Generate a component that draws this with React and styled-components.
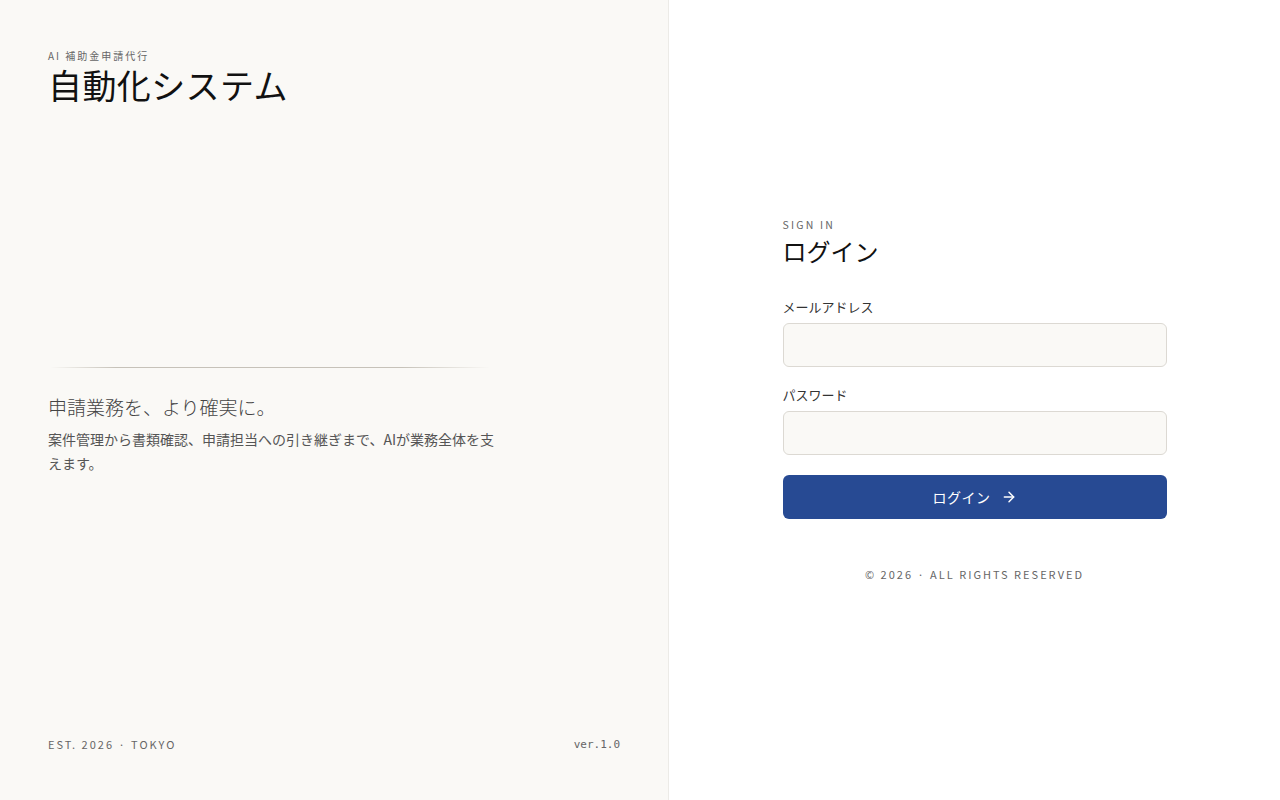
import React from 'react';
import styled, { createGlobalStyle } from 'styled-components';

const GlobalStyle = createGlobalStyle`
  html, body {
    margin: 0;
    padding: 0;
    height: 100%;
  }
  body {
    font-family: "Noto Sans CJK JP", "Noto Sans", sans-serif;
    color: #222;
    background: #ffffff;
  }
  #root {
    height: 100%;
  }
`;

const serif = `"Liberation Serif", "Noto Sans CJK JP", serif`;

const Page = styled.div`
  display: grid;
  grid-template-columns: 669px 1fr;
  height: 800px;
`;

const Brand = styled.section`
  display: flex;
  flex-direction: column;
  background: #faf9f6;
  border-right: 1px solid #ecebe7;
  padding: 48px;
`;

const Kicker = styled.div`
  font-size: 10px;
  letter-spacing: 2px;
  color: #666;
  line-height: 16px;
`;

const Title = styled.h1`
  margin: 0;
  font-family: ${serif};
  font-weight: 400;
  font-size: 34px;
  line-height: 48px;
  color: #111;
  letter-spacing: 0.4px;
`;

const Middle = styled.div`
  flex: 1;
  display: flex;
  flex-direction: column;
  justify-content: center;
  padding-bottom: 6px;
`;

const Rule = styled.div`
  height: 1px;
  width: 440px;
  margin-left: 2px;
  background: linear-gradient(90deg, rgba(180,175,165,0) 0%, #c6c2b9 15%, #c6c2b9 80%, rgba(180,175,165,0) 100%);
  margin-bottom: 27px;
`;

const Tagline = styled.p`
  margin: 0 0 4px;
  font-family: ${serif};
  font-weight: 300;
  font-size: 19px;
  line-height: 28px;
  color: #444;
`;

const Lead = styled.p`
  margin: 0;
  max-width: 450px;
  font-size: 14px;
  line-height: 24px;
  color: #555;
`;

const BrandFooter = styled.div`
  display: flex;
  justify-content: space-between;
  align-items: center;
`;

const Meta = styled.span`
  font-size: 11px;
  letter-spacing: 2px;
  color: #666;
`;

const Version = styled.span`
  font-family: "DejaVu Sans Mono", "Liberation Mono", monospace;
  font-size: 11px;
  color: #666;
`;

const Side = styled.section`
  display: flex;
  align-items: center;
  justify-content: center;
  background: #ffffff;
`;

const Form = styled.form`
  width: 384px;
  display: flex;
  flex-direction: column;
`;

const Eyebrow = styled.div`
  font-size: 10.5px;
  letter-spacing: 2.2px;
  color: #666;
  line-height: 14px;
`;

const FormTitle = styled.h2`
  margin: 4px 0 0;
  font-family: ${serif};
  font-weight: 400;
  font-size: 24px;
  line-height: 34px;
  color: #111;
`;

const Field = styled.label`
  display: flex;
  flex-direction: column;
  gap: 7px;
  margin-top: ${p => p.$first ? '28px' : '19px'};
`;

const FieldLabel = styled.span`
  font-size: 13px;
  line-height: 18px;
  color: #333;
`;

const Input = styled.input`
  box-sizing: border-box;
  height: 44px;
  width: 100%;
  border: 1px solid #dcd9d3;
  border-radius: 6px;
  background: #faf9f6;
  padding: 0 12px;
  font-size: 14px;
  outline: none;
`;

const Submit = styled.button`
  margin-top: 20px;
  height: 44px;
  border: none;
  border-radius: 6px;
  background: #274a93;
  color: #fff;
  font-family: inherit;
  font-size: 14px;
  letter-spacing: 0.5px;
  display: flex;
  align-items: center;
  justify-content: center;
  gap: 10px;
  cursor: pointer;
`;

const Copyright = styled.div`
  margin-top: 47px;
  text-align: center;
  font-size: 11px;
  letter-spacing: 2px;
  color: #666;
`;

const ArrowRight = () => (
  <svg width="16" height="16" viewBox="0 0 24 24" fill="none" stroke="currentColor" strokeWidth="2.2" strokeLinecap="round" strokeLinejoin="round">
    <path d="M5 12h14" />
    <path d="M12 5l7 7-7 7" />
  </svg>
);

export default function App() {
  return (
    <>
      <GlobalStyle />
      <Page>
        <Brand>
          <Kicker>AI 補助金申請代行</Kicker>
          <Title>自動化システム</Title>
          <Middle>
            <Rule />
            <Tagline>申請業務を、より確実に。</Tagline>
            <Lead>案件管理から書類確認、申請担当への引き継ぎまで、AIが業務全体を支えます。</Lead>
          </Middle>
          <BrandFooter>
            <Meta>EST. 2026 · TOKYO</Meta>
            <Version>ver.1.0</Version>
          </BrandFooter>
        </Brand>
        <Side>
          <Form onSubmit={e => e.preventDefault()}>
            <Eyebrow>SIGN IN</Eyebrow>
            <FormTitle>ログイン</FormTitle>
            <Field $first>
              <FieldLabel>メールアドレス</FieldLabel>
              <Input type="email" />
            </Field>
            <Field>
              <FieldLabel>パスワード</FieldLabel>
              <Input type="password" />
            </Field>
            <Submit type="submit">
              ログイン
              <ArrowRight />
            </Submit>
            <Copyright>© 2026 · ALL RIGHTS RESERVED</Copyright>
          </Form>
        </Side>
      </Page>
    </>
  );
}
